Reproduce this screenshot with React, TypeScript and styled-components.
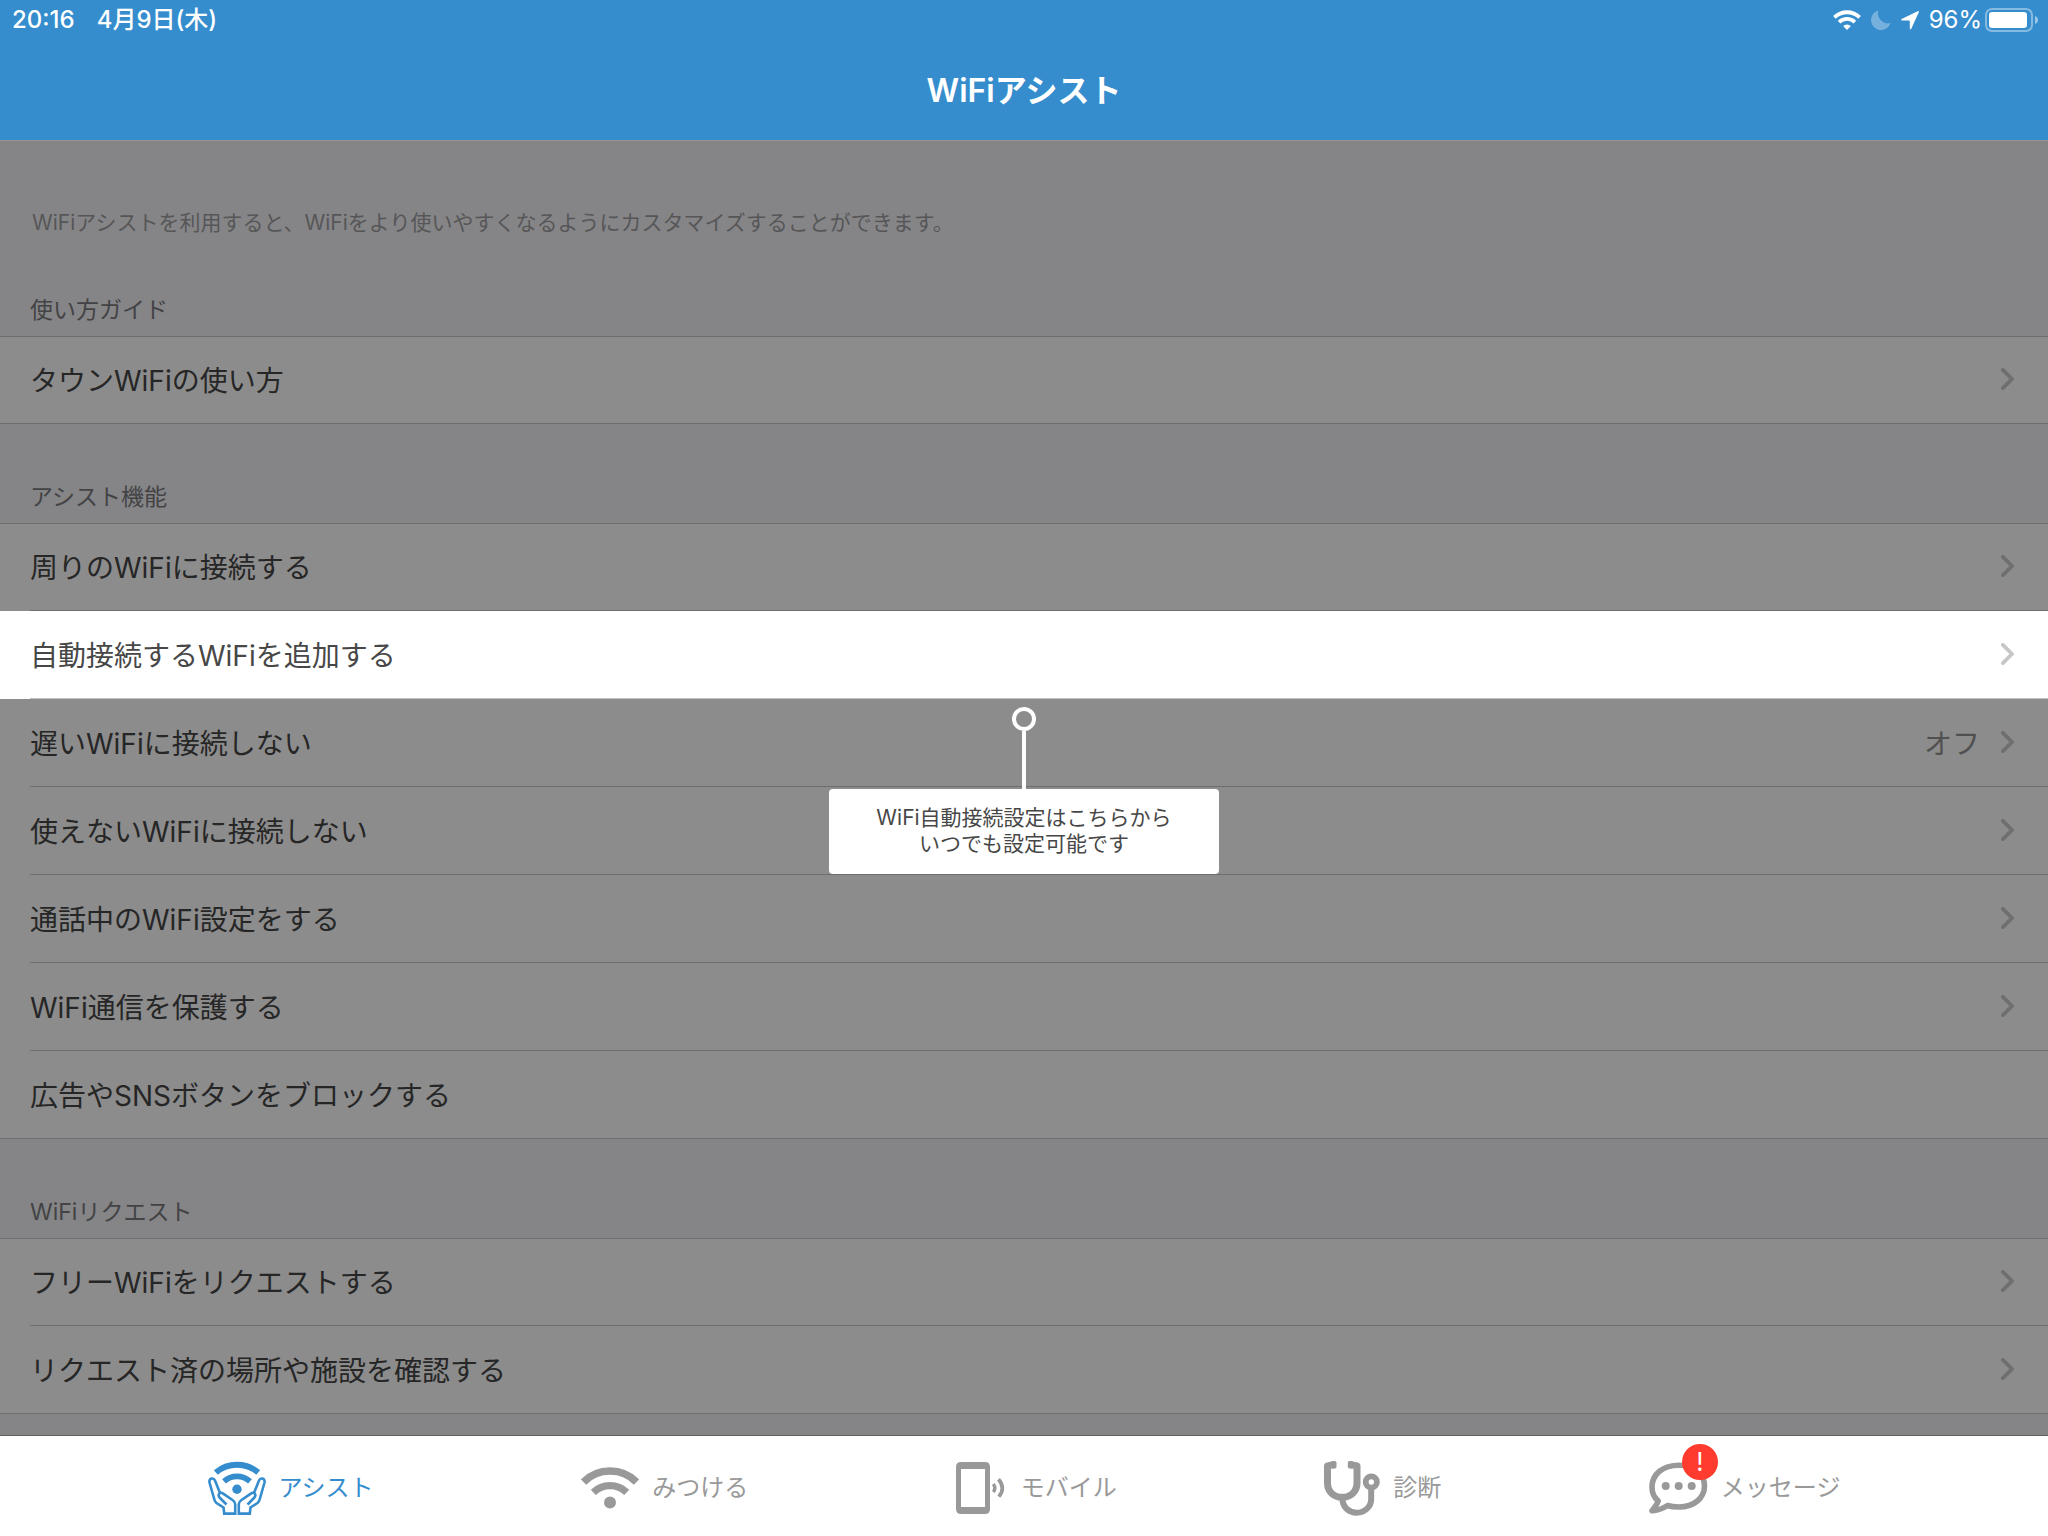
import React from 'react';
import styled, { createGlobalStyle } from 'styled-components';

const color = {
  brand: '#358dcd',
  backdrop: '#858587',
  cell: '#8c8c8c',
  line: '#6e6e70',
  text: '#262626',
  litText: '#474747',
  heading: '#434345',
  note: '#565657',
  detail: '#505051',
  tab: '#999999',
  alert: '#ff3b30',
};

const GlobalStyle = createGlobalStyle`
  *, *::before, *::after { box-sizing: border-box; }
  body {
    margin: 0;
    background: ${color.backdrop};
    font-family: Inter, "Noto Sans CJK JP", sans-serif;
    font-weight: 370;
  }
`;

const Screen = styled.div`
  display: flex;
  flex-direction: column;
  min-height: 100vh;
`;

const Header = styled.header`
  background: ${color.brand};
  color: #fff;
  border-bottom: 1px solid #949494;
`;

const StatusBar = styled.div`
  display: flex;
  align-items: center;
  justify-content: space-between;
  height: 40px;
  padding: 0 10px 0 12px;
  font-size: 24px;
  font-weight: 500;
  line-height: 40px;
`;

const StatusGroup = styled.div<{ $gap: number }>`
  display: flex;
  align-items: center;
  gap: ${(p) => p.$gap}px;
`;

const Battery = styled.span`
  display: flex;
  align-items: center;
  gap: 3px;
  font-weight: 400;
`;

const Title = styled.h1`
  margin: 0;
  height: 100px;
  font-size: 32px;
  font-weight: 600;
  line-height: 102px;
  text-align: center;
`;

const Main = styled.main`
  flex: 1;
`;

const Note = styled.p`
  margin: 0;
  padding: 68px 32px 0;
  color: ${color.note};
  font-size: 21px;
  line-height: 28px;
`;

const SectionTitle = styled.h2`
  display: flex;
  align-items: flex-end;
  margin: 0;
  height: 99px;
  padding: 0 30px 12px;
  color: ${color.heading};
  font-size: 23px;
  font-weight: inherit;
  line-height: 28px;
`;

const List = styled.ul`
  margin: 0;
  padding: 0;
  list-style: none;
  border-top: 1px solid ${color.line};
`;

const RowLink = styled.a<{ $lit?: boolean }>`
  display: flex;
  align-items: center;
  gap: 21px;
  min-height: 88px;
  margin-left: 30px;
  padding-top: 2px;
  padding-right: 34px;
  border-bottom: 1px solid ${(p) => (p.$lit ? '#c2c2c2' : color.line)};
  color: ${(p) => (p.$lit ? color.litText : color.text)};
  font-size: 28px;
  line-height: 40px;
  text-decoration: none;
`;

const Row = styled.li<{ $lit?: boolean }>`
  position: relative;
  background: ${(p) => (p.$lit ? '#fff' : color.cell)};

  &:first-child ${RowLink} {
    min-height: 87px;
  }

  &:last-child ${RowLink} {
    margin-left: 0;
    padding-left: 30px;
  }
`;

const RowLabel = styled.span`
  flex: 1;
`;

const Detail = styled.span`
  color: ${color.detail};
`;

const ChevronIcon = styled.svg`
  margin-bottom: 4px;
`;

const Coach = styled.div`
  position: absolute;
  z-index: 1;
  top: calc(100% + 8px);
  left: 0;
  right: 0;
  display: flex;
  flex-direction: column;
  align-items: center;
`;

const Ring = styled.span`
  width: 24px;
  height: 24px;
  border: 4px solid #fff;
  border-radius: 50%;
`;

const Stem = styled.span`
  width: 4px;
  height: 58px;
  background: #fff;
`;

const Bubble = styled.div`
  padding: 16px 47px 17px;
  border-radius: 4px;
  background: #fff;
  color: ${color.litText};
  font-size: 21px;
  line-height: 26px;
  text-align: center;
`;

const TabBar = styled.nav`
  display: flex;
  justify-content: space-evenly;
  height: 101px;
  padding-top: 4px;
  border-top: 1px solid #5f5f61;
  background: #fff;
`;

const Tab = styled.a<{ $active?: boolean }>`
  display: flex;
  align-items: center;
  gap: 13px;
  color: ${(p) => (p.$active ? color.brand : color.tab)};
  font-size: 24px;
  line-height: 36px;
  text-decoration: none;
`;

const TabIcon = styled.span`
  position: relative;
  display: flex;
`;

const Badge = styled.span`
  position: absolute;
  top: -18px;
  left: 33px;
  width: 36px;
  height: 36px;
  border-radius: 50%;
  background: ${color.alert};
  color: #fff;
  font-size: 25px;
  font-weight: 400;
  line-height: 36px;
  text-align: center;
`;

const Chevron = ({ lit }: { lit?: boolean }) => (
  <ChevronIcon width="13" height="22" viewBox="0 0 13 22" fill="none" stroke={lit ? '#c7c7c9' : '#6f6f70'} strokeWidth="3.8" strokeLinecap="round" strokeLinejoin="round">
    <path d="M1.900 1.900 11 11l-9.100 9.100" />
  </ChevronIcon>
);

const WifiStatus = () => (
  <svg width="28" height="20" viewBox="0 0 28 20" fill="none" stroke="#fff" strokeWidth="3.8">
    <path d="M1.4 7.4A18 18 0 0 1 26.6 7.4" />
    <path d="M6.1 12.1A11.4 11.4 0 0 1 21.9 12.1" />
    <path d="M14 20l-3.9-4a5.8 5.8 0 0 1 7.8 0z" fill="#fff" stroke="none" />
  </svg>
);

const Moon = () => (
  <svg width="20" height="20" viewBox="0 0 20 20" fill="#fff" fillOpacity="0.32">
    <path d="M7.4.4A10 10 0 1 0 19.6 13 10 10 0 0 1 7.4.4z" />
  </svg>
);

const LocationArrow = () => (
  <svg width="18" height="19" viewBox="0 0 18 19" fill="#fff">
    <path d="M17.2.1.6 8Q-.4 9 .9 9.400H8q.8 0 .8.800v7.200q.5 1.600 1.500.4L17.900 1Q18-.1 17.200.1z" />
  </svg>
);

const BatteryIcon = () => (
  <svg width="53" height="24" viewBox="0 0 53 24" fill="none">
    <rect x="1" y="1" width="46" height="22" rx="6" stroke="#fff" strokeOpacity="0.4" strokeWidth="2" />
    <rect x="4" y="4" width="38" height="16" rx="3" fill="#fff" />
    <path d="M50 8q3 1.200 3 4t-3 4z" fill="#fff" fillOpacity="0.5" />
  </svg>
);

const hand =
  'M18.500 43.500 12 37C10.300 35.200 10.200 33.400 11.600 32.300 12.900 31.300 14.100 31.700 15.200 32.700L24.500 39Q27.200 40.800 27.200 43V52.600H16.200L15.500 46.500 8.500 42Q6.800 40.600 6.200 38L1.500 21.500Q1 18.200 3.600 17.500 6 17.100 7 19.500L12 32';

const AssistIcon = () => (
  <svg width="58" height="54" viewBox="0 0 58 54" fill="none" stroke="currentColor">
    <path d="M7.800 11.500A33 33 0 0 1 50.200 11.500" strokeWidth="6" />
    <path d="M16 20.300A19.500 19.500 0 0 1 42 20.300" strokeWidth="5.600" />
    <circle cx="29" cy="28.300" r="4.700" fill="currentColor" stroke="none" />
    <path d={hand} strokeWidth="2.600" />
    <path d={hand} strokeWidth="2.600" transform="matrix(-1 0 0 1 58 0)" />
  </svg>
);

const FindIcon = () => (
  <svg width="58" height="42" viewBox="0 0 58 42" fill="none" stroke="currentColor">
    <path d="M2.500 15A37.400 37.400 0 0 1 55.500 15" strokeWidth="7.500" />
    <path d="M12.300 25.300A24.200 24.200 0 0 1 45.700 25.300" strokeWidth="7.300" />
    <circle cx="29" cy="35.500" r="6" fill="currentColor" stroke="none" />
  </svg>
);

const MobileIcon = () => (
  <svg width="52" height="52" viewBox="0 0 52 52" fill="none" stroke="currentColor">
    <path d="M5 0H29Q34 0 34 5V47Q34 52 29 52H5Q0 52 0 47V5Q0 0 5 0zM5 7V45H29V7z" fill="currentColor" fillRule="evenodd" stroke="none" />
    <path d="M37.300 22Q40.400 26 37.300 30" strokeWidth="3.400" />
    <path d="M42.500 17.300Q50 26 42.800 34.700" strokeWidth="3.600" />
  </svg>
);

const DiagnosisIcon = () => (
  <svg width="56" height="55" viewBox="0 0 56 55" fill="none" stroke="currentColor">
    <path d="M9.500 3.700 3.500 4.900V22C3.500 31 10 36.300 18.200 36.300S33 31 33 22V4.900L27 3.700" strokeWidth="7" strokeLinejoin="round" />
    <rect x="7" y="0" width="5.500" height="7.600" rx="1.800" fill="currentColor" stroke="none" />
    <rect x="23.800" y="0" width="5.500" height="7.600" rx="1.800" fill="currentColor" stroke="none" />
    <path d="M18.400 38C18.800 46.500 25 51.700 32.700 51.700S47.200 46 47.200 38V27" strokeWidth="6" />
    <circle cx="47.300" cy="21" r="5.600" strokeWidth="5.800" />
  </svg>
);

const MessageIcon = () => (
  <svg width="59" height="52" viewBox="0 0 59 52" fill="none" stroke="currentColor">
    <path
      d="M18.500 43.500C22 44.700 26 45 30 45 45 45 55.500 36 55.500 24 55.500 11 44 3.200 30 3.200 14 3.200 3 12 3 25 3 31 5 35.500 9.200 39 8 43 5.500 45.500 3 48.700 9 48.500 14 46.500 18.500 43.500z"
      strokeWidth="5.600"
      strokeLinejoin="round"
    />
    <g fill="currentColor" stroke="none">
      <circle cx="16.700" cy="24" r="4" />
      <circle cx="29.700" cy="24" r="4" />
      <circle cx="42.700" cy="24" r="4" />
    </g>
  </svg>
);

type Item = { label: string; detail?: string; plain?: boolean; hint?: string[] };

const sections: { title: string; items: Item[] }[] = [
  { title: '使い方ガイド', items: [{ label: 'タウンWiFiの使い方' }] },
  {
    title: 'アシスト機能',
    items: [
      { label: '周りのWiFiに接続する' },
      { label: '自動接続するWiFiを追加する', hint: ['WiFi自動接続設定はこちらから', 'いつでも設定可能です'] },
      { label: '遅いWiFiに接続しない', detail: 'オフ' },
      { label: '使えないWiFiに接続しない' },
      { label: '通話中のWiFi設定をする' },
      { label: 'WiFi通信を保護する' },
      { label: '広告やSNSボタンをブロックする', plain: true },
    ],
  },
  {
    title: 'WiFiリクエスト',
    items: [{ label: 'フリーWiFiをリクエストする' }, { label: 'リクエスト済の場所や施設を確認する' }],
  },
];

const tabs = [
  { label: 'アシスト', Icon: AssistIcon, active: true },
  { label: 'みつける', Icon: FindIcon },
  { label: 'モバイル', Icon: MobileIcon },
  { label: '診断', Icon: DiagnosisIcon },
  { label: 'メッセージ', Icon: MessageIcon, badge: '!' },
];

export default function App() {
  return (
    <>
      <GlobalStyle />
      <Screen lang="ja">
        <Header>
          <StatusBar>
            <StatusGroup $gap={22}>
              <span>20:16</span>
              <span>4月9日(木)</span>
            </StatusGroup>
            <StatusGroup $gap={10}>
              <WifiStatus />
              <Moon />
              <LocationArrow />
              <Battery>
                <span>96%</span>
                <BatteryIcon />
              </Battery>
            </StatusGroup>
          </StatusBar>
          <Title>WiFiアシスト</Title>
        </Header>

        <Main>
          <Note>WiFiアシストを利用すると、WiFiをより使いやすくなるようにカスタマイズすることができます。</Note>
          {sections.map((section) => (
            <section key={section.title}>
              <SectionTitle>{section.title}</SectionTitle>
              <List>
                {section.items.map((item) => (
                  <Row key={item.label} $lit={!!item.hint}>
                    <RowLink href="#" $lit={!!item.hint}>
                      <RowLabel>{item.label}</RowLabel>
                      {item.detail && <Detail>{item.detail}</Detail>}
                      {!item.plain && <Chevron lit={!!item.hint} />}
                    </RowLink>
                    {item.hint && (
                      <Coach role="tooltip">
                        <Ring />
                        <Stem />
                        <Bubble>
                          {item.hint.map((line) => (
                            <div key={line}>{line}</div>
                          ))}
                        </Bubble>
                      </Coach>
                    )}
                  </Row>
                ))}
              </List>
            </section>
          ))}
        </Main>

        <TabBar>
          {tabs.map(({ label, Icon, active, badge }) => (
            <Tab key={label} href="#" $active={active} aria-current={active ? 'page' : undefined}>
              <TabIcon>
                <Icon />
                {badge && <Badge>{badge}</Badge>}
              </TabIcon>
              {label}
            </Tab>
          ))}
        </TabBar>
      </Screen>
    </>
  );
}
